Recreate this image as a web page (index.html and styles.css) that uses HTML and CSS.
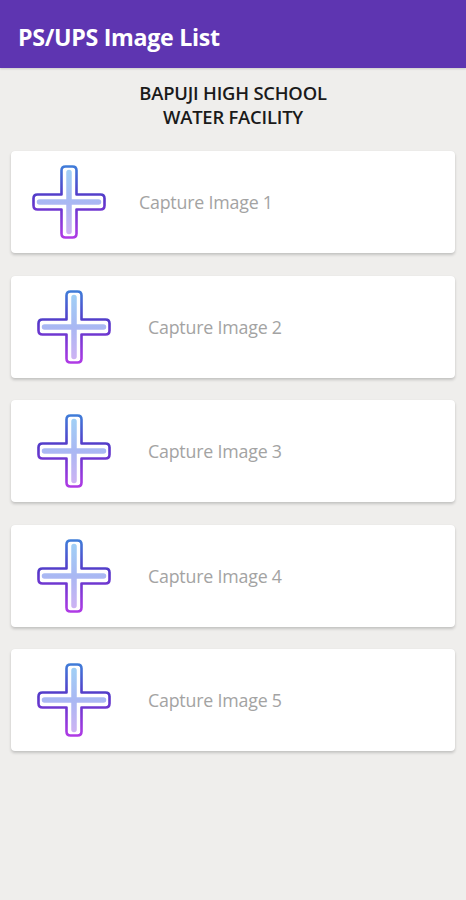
FILE: index.html
```html
<!DOCTYPE html>
<html>
<head>
<meta charset="utf-8">
<link rel="stylesheet" href="styles.css">
</head>
<body>
<svg width="0" height="0" class="defs">
  <defs>
    <linearGradient id="stroke" x1="0" y1="0" x2="0" y2="74" gradientUnits="userSpaceOnUse">
      <stop offset="0" stop-color="#3f7fd9"/>
      <stop offset="0.45" stop-color="#5636c8"/>
      <stop offset="1" stop-color="#b23be6"/>
    </linearGradient>
    <linearGradient id="fill" x1="0" y1="0" x2="0" y2="74" gradientUnits="userSpaceOnUse">
      <stop offset="0" stop-color="#9fd3f6"/>
      <stop offset="0.5" stop-color="#a9b8f3"/>
      <stop offset="1" stop-color="#d3b2f3"/>
    </linearGradient>
    <symbol id="cross" viewBox="0 0 74 74">
      <path d="M29.5,5.5 Q29.5,1.5 33.5,1.5 H40.5 Q44.5,1.5 44.5,5.5 V29.5 H68.5 Q72.5,29.5 72.5,33.5 V40.5 Q72.5,44.5 68.5,44.5 H44.5 V68.5 Q44.5,72.5 40.5,72.5 H33.5 Q29.5,72.5 29.5,68.5 V44.5 H5.5 Q1.5,44.5 1.5,40.5 V33.5 Q1.5,29.5 5.5,29.5 H29.5 Z" fill="#fff" stroke="url(#stroke)" stroke-width="2.6" stroke-linejoin="round"/>
      <path d="M37,7.5 V66.5 M7.5,37 H66.5" stroke="url(#fill)" stroke-width="5.5" stroke-linecap="round" fill="none"/>
    </symbol>
  </defs>
</svg>
<header class="appbar">PS/UPS Image List</header>
<div class="heading">BAPUJI HIGH SCHOOL<br>WATER FACILITY</div>
<main class="list">
  <div class="card card-first">
    <svg class="icon"><use href="#cross"/></svg>
    <span class="label">Capture Image 1</span>
  </div>
  <div class="card">
    <svg class="icon"><use href="#cross"/></svg>
    <span class="label">Capture Image 2</span>
  </div>
  <div class="card">
    <svg class="icon"><use href="#cross"/></svg>
    <span class="label">Capture Image 3</span>
  </div>
  <div class="card">
    <svg class="icon"><use href="#cross"/></svg>
    <span class="label">Capture Image 4</span>
  </div>
  <div class="card">
    <svg class="icon"><use href="#cross"/></svg>
    <span class="label">Capture Image 5</span>
  </div>
</main>
</body>
</html>
```
FILE: styles.css
```css
html, body {
  margin: 0;
  padding: 0;
}
body {
  width: 466px;
  height: 900px;
  background: #efeeec;
  font-family: "Open Sans", "Noto Sans", sans-serif;
  overflow: hidden;
}
.defs {
  position: absolute;
  width: 0;
  height: 0;
}
.appbar {
  height: 68px;
  background: #5e35b1;
  color: #fff;
  font-weight: 700;
  font-size: 23.2px;
  letter-spacing: -0.3px;
  display: flex;
  align-items: center;
  padding-left: 18px;
  box-sizing: border-box;
  padding-top: 6px;
  box-shadow: 0 1px 2px rgba(0,0,0,0.15);
}
.heading {
  margin-top: 13px;
  text-align: center;
  font-size: 18.4px;
  font-weight: 600;
  line-height: 24px;
  color: #1a1a1a;
  letter-spacing: -0.2px;
}
.list {
  margin-top: 22px;
  padding: 0 11px;
  display: flex;
  flex-direction: column;
  gap: 22.5px;
}
.card {
  height: 102px;
  background: #fff;
  border-radius: 4px;
  box-shadow: 0 2px 3px rgba(0,0,0,0.18), 0 0 1px rgba(0,0,0,0.08);
  display: flex;
  align-items: center;
  padding-left: 26px;
  gap: 37px;
}
.card-first {
  padding-left: 21px;
  gap: 33px;
}
.icon {
  width: 74px;
  height: 74px;
  flex: none;
}
.label {
  font-size: 17.8px;
  color: #a3a3a3;
  letter-spacing: -0.2px;
}
```
